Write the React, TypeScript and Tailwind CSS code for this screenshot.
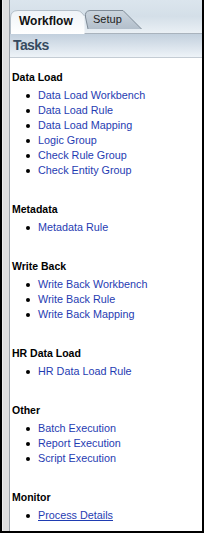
import React from 'react';

type Section = { title: string; items: string[]; underline?: boolean };

const SECTIONS: Section[] = [
  {
    title: 'Data Load',
    items: ['Data Load Workbench', 'Data Load Rule', 'Data Load Mapping', 'Logic Group', 'Check Rule Group', 'Check Entity Group'],
  },
  { title: 'Metadata', items: ['Metadata Rule'] },
  { title: 'Write Back', items: ['Write Back Workbench', 'Write Back Rule', 'Write Back Mapping'] },
  { title: 'HR Data Load', items: ['HR Data Load Rule'] },
  { title: 'Other', items: ['Batch Execution', 'Report Execution', 'Script Execution'] },
  { title: 'Monitor', items: ['Process Details'], underline: true },
];

const FONT = { fontFamily: '"Liberation Sans", Arial, sans-serif' };

// Selected tab: white face, rounded top-left, slanted right side
function WorkflowTab() {
  return (
    <div className="relative z-10 w-[75px] h-[24px] flex items-center pl-[9px] pb-[2px]">
      <svg className="absolute inset-0" width="75" height="24" viewBox="0 0 75 24">
        <defs>
          <linearGradient id="wf" x1="0" y1="0" x2="0" y2="1">
            <stop offset="0" stopColor="#eef3f7" />
            <stop offset="1" stopColor="#ffffff" />
          </linearGradient>
        </defs>
        <path d="M0.5,24 L0.5,8 Q0.5,0.5 8,0.5 L67,0.5 Q70,0.5 72,3 L74.5,6 L74.5,24 Z" fill="url(#wf)" />
        <path d="M0.5,24 L0.5,8 Q0.5,0.5 8,0.5 L67,0.5 Q70,0.5 72,3 L74.5,6" fill="none" stroke="#b3bec8" />
      </svg>
      <span className="relative text-[12px] font-bold text-[#111]">Workflow</span>
    </div>
  );
}

function SetupTab() {
  return (
    <div className="relative w-[58px] h-[19px] -ml-[1px] flex items-center pl-[9px]">
      <svg className="absolute inset-0" width="58" height="19" viewBox="0 0 58 19">
        <defs>
          <linearGradient id="su" x1="0" y1="0" x2="0" y2="1">
            <stop offset="0" stopColor="#cbd5de" />
            <stop offset="1" stopColor="#b3bfcb" />
          </linearGradient>
        </defs>
        <path d="M4,19 L1.5,7 Q0.5,1 6,0.5 L39,0.5 L57.5,19 Z" fill="url(#su)" />
        <path d="M4,19 L1.5,7 Q0.5,1 6,0.5 L39,0.5 L57.5,19" fill="none" stroke="#7f8b97" />
      </svg>
      <span className="relative text-[11px] text-[#222]">Setup</span>
    </div>
  );
}

export default function App() {
  return (
    <div className="w-[204px] h-[533px] bg-black flex px-[2px] pb-[2px]" style={FONT}>
      <div className="w-[7px] bg-[#dedede] border-l border-[#ececec]" />
      <div className="flex-1 flex flex-col min-w-0 bg-white border-l border-[#9aa1a8]">
        {/* tab strip */}
        <div className="h-[34px] shrink-0 flex items-start pt-[10px] border-b border-[#a9b3bd] bg-linear-to-b from-[#dbe5ed] via-[#d4dfe8] to-[#eaf0f5]">
          <WorkflowTab />
          <SetupTab />
        </div>

        {/* panel header */}
        <div className="h-[24px] shrink-0 flex items-center pl-[3px] border-b border-[#c4ccd4] bg-linear-to-b from-[#c2d0dd] to-[#eef3f8]">
          <span className="text-[14px] font-bold tracking-[-0.6px] text-[#364a5f]">Tasks</span>
        </div>

        <div className="flex-1 pt-[12px] pl-[2px]">
          {SECTIONS.map((s, i) => (
            <div key={s.title} className={i > 0 ? 'mt-[24px]' : ''}>
              <div className="text-[10.5px] leading-[15px] font-bold text-black mb-[3px]">{s.title}</div>
              {s.items.map(item => (
                <div key={item} className="flex items-center h-[15px] pl-[14px] gap-[8px]">
                  <span className="w-[4px] h-[4px] rounded-full bg-black shrink-0" />
                  <span className={`text-[10.8px] leading-[15px] text-[#1f3cb2] whitespace-nowrap ${s.underline ? 'underline' : ''}`}>
                    {item}
                  </span>
                </div>
              ))}
            </div>
          ))}
        </div>
      </div>
    </div>
  );
}
